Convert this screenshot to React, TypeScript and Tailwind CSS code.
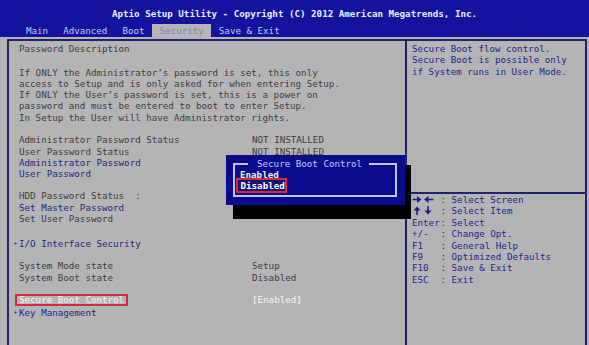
import React from "react";

const mono = { fontFamily: '"DejaVu Sans Mono", "Liberation Mono", monospace' };

function Row({
  label,
  value,
  tone = "gray",
  className = "",
}: {
  label: React.ReactNode;
  value?: React.ReactNode;
  tone?: "gray" | "blue";
  className?: string;
}) {
  return (
    <div className={`flex h-[11.25px] leading-[11.25px] whitespace-pre ${className}`}>
      <div
        className={`w-[233px] ${tone === "blue" ? "text-[#262686]" : "text-[#3c3c3c]"}`}
      >
        {label}
      </div>
      {value !== undefined && <div className="text-[#3c3c3c]">{value}</div>}
    </div>
  );
}

function Bullet() {
  return <span className="inline-block -ml-[5px] w-[5px] text-[6px] text-[#262686] align-top leading-[9px]">▸</span>;
}

function ArrowsLR() {
  return (
    <svg width="22" height="9" viewBox="0 0 22 9" className="inline-block align-[-1px]">
      <g fill="#1c1c8c" stroke="#1c1c8c">
        <line x1="0.5" y1="4.5" x2="6" y2="4.5" strokeWidth="1.6" />
        <polygon points="5,1 9.5,4.5 5,8" stroke="none" />
        <polygon points="16.5,1 12,4.5 16.5,8" stroke="none" />
        <line x1="16" y1="4.5" x2="21.5" y2="4.5" strokeWidth="1.6" />
      </g>
    </svg>
  );
}

function ArrowsUD() {
  return (
    <svg width="22" height="9" viewBox="0 0 22 9" className="inline-block align-[-1px]">
      <g fill="#1c1c8c" stroke="#1c1c8c">
        <polygon points="1.5,4.5 5,0.5 8.5,4.5" stroke="none" />
        <line x1="5" y1="4" x2="5" y2="9" strokeWidth="1.6" />
        <line x1="16" y1="0" x2="16" y2="5" strokeWidth="1.6" />
        <polygon points="12.5,4.5 16,8.5 19.5,4.5" stroke="none" />
      </g>
    </svg>
  );
}

export default function App() {
  const tabs = ["Main", "Advanced", "Boot", "Security", "Save & Exit"];
  const keys: [string, React.ReactNode, string][] = [
    ["lr", <ArrowsLR />, ": Select Screen"],
    ["ud", <ArrowsUD />, ": Select Item"],
    ["Enter", "Enter", ": Select"],
    ["+/-", "+/-", ": Change Opt."],
    ["F1", "F1", ": General Help"],
    ["F9", "F9", ": Optimized Defaults"],
    ["F10", "F10", ": Save & Exit"],
    ["ESC", "ESC", ": Exit"],
  ];

  return (
    <div
      className="relative w-[589px] h-[345px] overflow-hidden bg-[#b4b4b4] text-[9.2px]"
      style={mono}
    >
      {/* Header */}
      <div className="h-[37px] bg-[#1313a0] flex flex-col">
        <div className="h-[24px] pt-[3px] flex items-center justify-center text-[#ececf6] font-bold whitespace-pre">
          Aptio Setup Utility - Copyright (C) 2012 American Megatrends, Inc.
        </div>
        <div className="h-[13px] flex pl-[18.5px] leading-[13px]">
          {tabs.map((t) => (
            <div
              key={t}
              className={`px-[7.5px] whitespace-pre ${
                t === "Security" ? "bg-[#b6b6b8] text-[#8088aa]" : "text-[#c4c8ec]"
              }`}
            >
              {t}
            </div>
          ))}
        </div>
      </div>

      {/* Panels */}
      <div className="flex mt-[2px] ml-[7px] h-[306px]">
        {/* Left panel */}
        <div className="w-[398px] border-l-2 border-t-2 border-[#23236c] pl-[10px] pt-[1.7px] flex flex-col">
          <Row label="Password Description" />
          <div className="mt-[12.75px]">
            <Row label="If ONLY the Administrator’s password is set, this only" />
            <Row label="access to Setup and is only asked for when entering Setup." />
            <Row label="If ONLY the User’s password is set, this is a power on" />
            <Row label="password and must be entered to boot to enter Setup." />
            <Row label="In Setup the User will have Administrator rights." />
          </div>
          <div className="mt-[11.45px]">
            <Row label="Administrator Password Status" value="NOT INSTALLED" />
            <Row label="User Password Status" value="NOT INSTALLED" />
            <Row label="Administrator Password" tone="blue" />
            <Row label="User Password" tone="blue" />
          </div>
          <div className="mt-[11px]">
            <Row label="HDD Password Status  :" />
            <Row label="Set Master Password" tone="blue" />
            <Row label="Set User Password" />
          </div>
          <div className="mt-[13.5px]">
            <Row
              tone="blue"
              label={
                <>
                  <Bullet />
                  {"I/O Interface Security"}
                </>
              }
            />
          </div>
          <div className="mt-[11.45px]">
            <Row label="System Mode state" value="Setup" />
            <Row label="System Boot state" value="Disabled" />
          </div>
          <div className="mt-[10.8px] flex h-[11.25px] leading-[11.25px] whitespace-pre">
            <div className="w-[233px]">
              <span className="-ml-[4px] px-[2px] border-2 border-[#d42a3c] text-[#f4f4f4] leading-[8px] inline-block">
                Secure Boot Control
              </span>
            </div>
            <div className="text-[#f4f4f4]">[Enabled]</div>
          </div>
          <div className="mt-[1.75px]">
            <Row
              tone="blue"
              label={
                <>
                  <Bullet />
                  {"Key Management"}
                </>
              }
            />
          </div>
        </div>

        {/* Right panel */}
        <div className="w-[182px] border-l-2 border-t-2 border-r-2 border-[#23236c] flex flex-col text-[#25258a]">
          <div className="h-[151px] pl-[5px] pt-[1.7px] whitespace-pre leading-[11.8px]">
            <div>Secure Boot flow control.</div>
            <div>Secure Boot is possible only</div>
            <div>if System runs in User Mode.</div>
          </div>
          <div className="border-t-2 border-[#23236c] pl-[5px] whitespace-pre leading-[11.4px]">
            {keys.map(([id, k, rest]) => (
              <div key={id} className="h-[11.4px] flex">
                <span className="w-[28.5px] inline-block">{k}</span>
                <span>{rest}</span>
              </div>
            ))}
          </div>
        </div>
      </div>

      {/* Popup shadow */}
      <div className="absolute left-[233px] top-[165px] w-[178px] h-[54px] bg-black" />
      {/* Popup */}
      <div className="absolute left-[226px] top-[155px] w-[179px] h-[50px] bg-[#0b0b8e]">
        <div className="absolute left-[7px] top-[8px] w-[164px] h-[34px] border-2 border-[#c4c4e4]" />
        <div className="absolute left-[22px] top-[3px] h-[11px] leading-[11px] pl-[9px] pr-[7px] bg-[#0b0b8e] text-[#c8ccf4] whitespace-pre">
          Secure Boot Control
        </div>
        <div className="absolute left-[14px] top-[13.5px] leading-[11px] text-[#f0f0f0] font-bold whitespace-pre">
          Enabled
        </div>
        <div className="absolute left-[9.5px] top-[23px] h-[15px] w-[51px] border-2 border-[#d42a3c] bg-[#121278] pl-[3px] leading-[11px] text-white font-bold whitespace-pre">
          Disabled
        </div>
      </div>
    </div>
  );
}
